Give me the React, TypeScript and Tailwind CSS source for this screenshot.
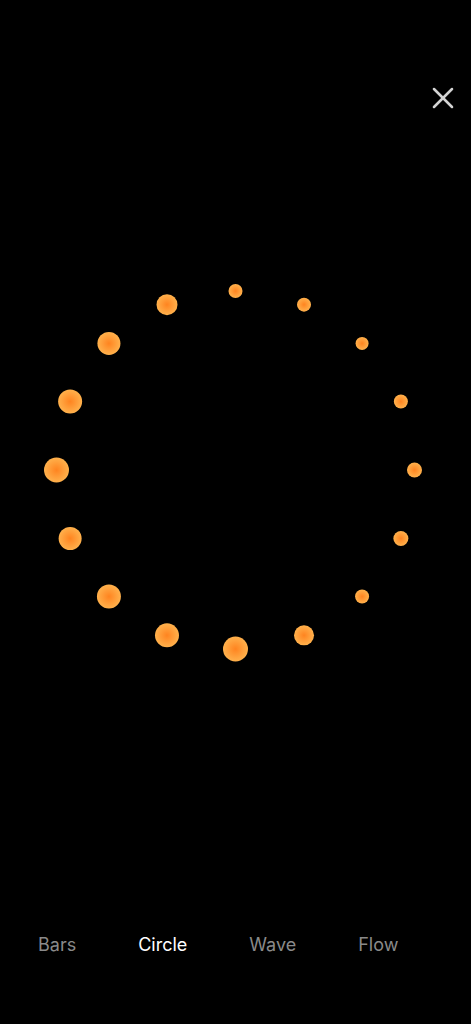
import { X } from 'lucide-react'

type Dot = { size: number }

// clockwise from top, 16 dots on the ring
const DOTS: Dot[] = [
  { size: 14 }, { size: 14 }, { size: 13 }, { size: 14 },
  { size: 15 }, { size: 15 }, { size: 14 }, { size: 20 },
  { size: 25 }, { size: 24 }, { size: 24 }, { size: 23 },
  { size: 25 }, { size: 24 }, { size: 23 }, { size: 21 },
]

const TABS = ['Bars', 'Circle', 'Wave', 'Flow']

function CircleVisualizer() {
  const cx = 199.5
  const cy = 200
  const r = 179
  return (
    <svg width={400} height={400} viewBox="0 0 400 400" className="block">
      <defs>
        <radialGradient id="dot" cx="50%" cy="50%" r="50%">
          <stop offset="0%" stopColor="#ff8420" />
          <stop offset="100%" stopColor="#ffb14c" />
        </radialGradient>
      </defs>
      {DOTS.map((d, i) => {
        const a = (i * Math.PI * 2) / DOTS.length
        const x = cx + r * Math.sin(a)
        const y = cy - r * Math.cos(a)
        return <circle key={i} cx={x} cy={y} r={d.size / 2} fill="url(#dot)" />
      })}
    </svg>
  )
}

export default function App() {
  return (
    <div
      className="w-[471px] h-[1024px] bg-black flex flex-col overflow-hidden"
      style={{ fontFamily: 'Inter, "Liberation Sans", sans-serif' }}
    >
      {/* Top bar */}
      <div className="h-[270px] flex justify-end items-start pt-[80px] pr-[10px]">
        <button className="w-9 h-9 flex items-center justify-center text-[#d4d4d4]">
          <X className="w-9 h-9" strokeWidth={1.7} />
        </button>
      </div>

      {/* Visualizer */}
      <div className="flex justify-center">
        <CircleVisualizer />
      </div>

      <div className="flex-1" />

      {/* Mode tabs */}
      <div className="flex items-center gap-[62px] pl-[38px] h-[24px] mb-[68px] text-[18px]">
        {TABS.map((t) => (
          <span key={t} className={t === 'Circle' ? 'text-white' : 'text-[#8a8a8a]'}>
            {t}
          </span>
        ))}
      </div>
    </div>
  )
}
